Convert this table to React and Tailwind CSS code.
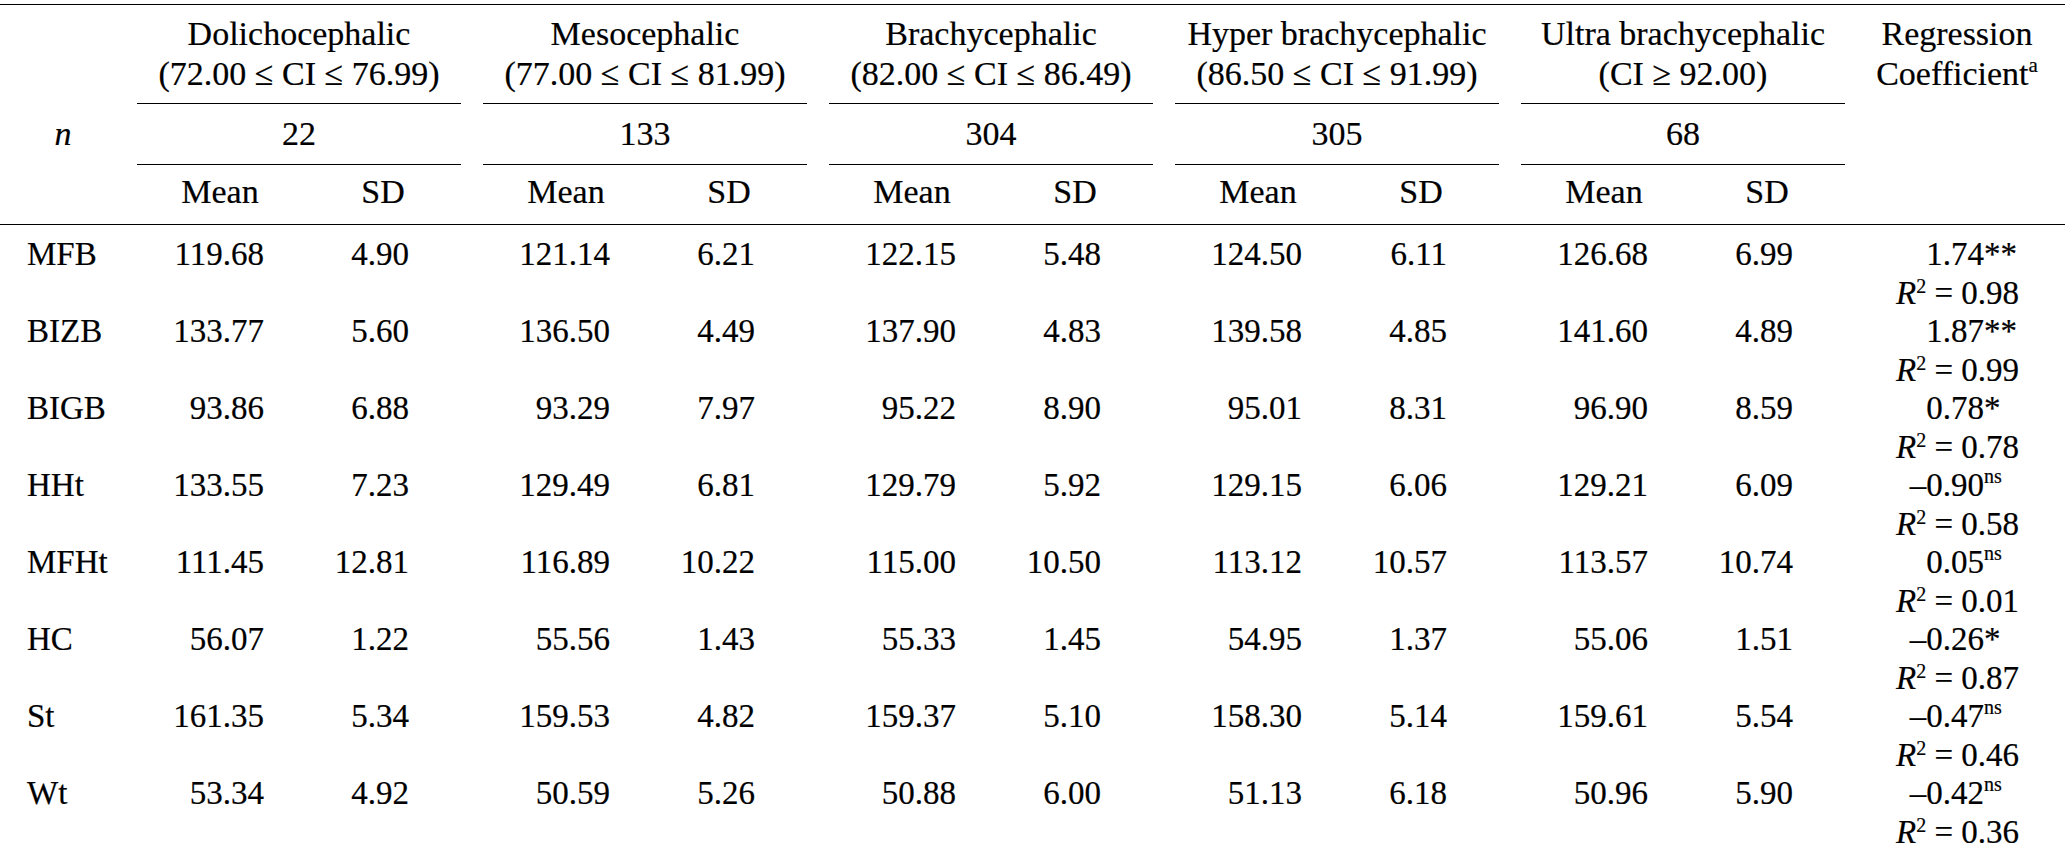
import React from "react";

const groups = [
  { name: "Dolichocephalic", range: "(72.00 ≤ CI ≤ 76.99)", n: "22" },
  { name: "Mesocephalic", range: "(77.00 ≤ CI ≤ 81.99)", n: "133" },
  { name: "Brachycephalic", range: "(82.00 ≤ CI ≤ 86.49)", n: "304" },
  { name: "Hyper brachycephalic", range: "(86.50 ≤ CI ≤ 91.99)", n: "305" },
  { name: "Ultra brachycephalic", range: "(CI ≥ 92.00)", n: "68" },
];

const rows = [
  ["MFB", ["119.68", "4.90", "121.14", "6.21", "122.15", "5.48", "124.50", "6.11", "126.68", "6.99"], "1.74", "**", false, "0.98"],
  ["BIZB", ["133.77", "5.60", "136.50", "4.49", "137.90", "4.83", "139.58", "4.85", "141.60", "4.89"], "1.87", "**", false, "0.99"],
  ["BIGB", ["93.86", "6.88", "93.29", "7.97", "95.22", "8.90", "95.01", "8.31", "96.90", "8.59"], "0.78", "*", false, "0.78"],
  ["HHt", ["133.55", "7.23", "129.49", "6.81", "129.79", "5.92", "129.15", "6.06", "129.21", "6.09"], "–0.90", "ns", true, "0.58"],
  ["MFHt", ["111.45", "12.81", "116.89", "10.22", "115.00", "10.50", "113.12", "10.57", "113.57", "10.74"], "0.05", "ns", true, "0.01"],
  ["HC", ["56.07", "1.22", "55.56", "1.43", "55.33", "1.45", "54.95", "1.37", "55.06", "1.51"], "–0.26", "*", false, "0.87"],
  ["St", ["161.35", "5.34", "159.53", "4.82", "159.37", "5.10", "158.30", "5.14", "159.61", "5.54"], "–0.47", "ns", true, "0.46"],
  ["Wt", ["53.34", "4.92", "50.59", "5.26", "50.88", "6.00", "51.13", "6.18", "50.96", "5.90"], "–0.42", "ns", true, "0.36"],
];

export default function App() {
  return (
    <div className="w-[2072px] h-[855px] bg-white text-black overflow-hidden font-['Liberation_Serif','Times_New_Roman',serif] [-webkit-text-stroke:0.2px_black]">
      <div className="w-[2065px] mt-[4px] border-t border-black">
        {/* Header */}
        <div className="grid grid-cols-[126px_repeat(10,173px)_209px] grid-rows-[99px_61px_59px] text-[34px] leading-[40px] border-b border-black">
          <div></div>
          {groups.map((g) => (
            <div key={g.name + "h"} className="col-span-2 px-[11px]">
              <div className="h-full border-b border-black pt-[9px] text-center">
                <div>{g.name}</div>
                <div>{g.range}</div>
              </div>
            </div>
          ))}
          <div className="row-span-3 pt-[9px] pr-[7px] text-center">
            <div>Regression</div>
            <div>
              Coefficient
              <sup className="text-[21px] -top-[13px]">a</sup>
            </div>
          </div>
          <div className="pt-[10px] text-center italic">n</div>
          {groups.map((g) => (
            <div key={g.name + "n"} className="col-span-2 px-[11px]">
              <div className="h-full border-b border-black pt-[10px] text-center">{g.n}</div>
            </div>
          ))}
          <div></div>
          {groups.map((g) => (
            <React.Fragment key={g.name + "ms"}>
              <div className="pt-[7px] pl-[15px] text-center">Mean</div>
              <div className="pt-[7px] pr-[5px] text-center">SD</div>
            </React.Fragment>
          ))}
        </div>

        {/* Body */}
        <div className="pt-[10px] text-[33px] leading-[38.5px]">
          {rows.map(([label, vals, coef, suf, supSuf, r2]) => (
            <div key={label} className="grid grid-cols-[126px_repeat(10,173px)_209px] h-[77px]">
              <div className="pl-[27px]">{label}</div>
              {vals.map((v, i) => (
                <div key={i} className={i % 2 === 0 ? "text-right pr-[35px]" : "text-right pr-[63px]"}>
                  {v}
                </div>
              ))}
              <div className="pr-[46px] flex flex-col items-end">
                <div className="flex">
                  <span>{coef}</span>
                  <span className="w-[35px] text-left">
                    {supSuf ? <sup className="text-[20px] -top-[13px]">{suf}</sup> : suf}
                  </span>
                </div>
                <div>
                  <span className="italic">R</span>
                  <sup className="text-[20px] -top-[11px]">2</sup> = {r2}
                </div>
              </div>
            </div>
          ))}
        </div>
      </div>
    </div>
  );
}
